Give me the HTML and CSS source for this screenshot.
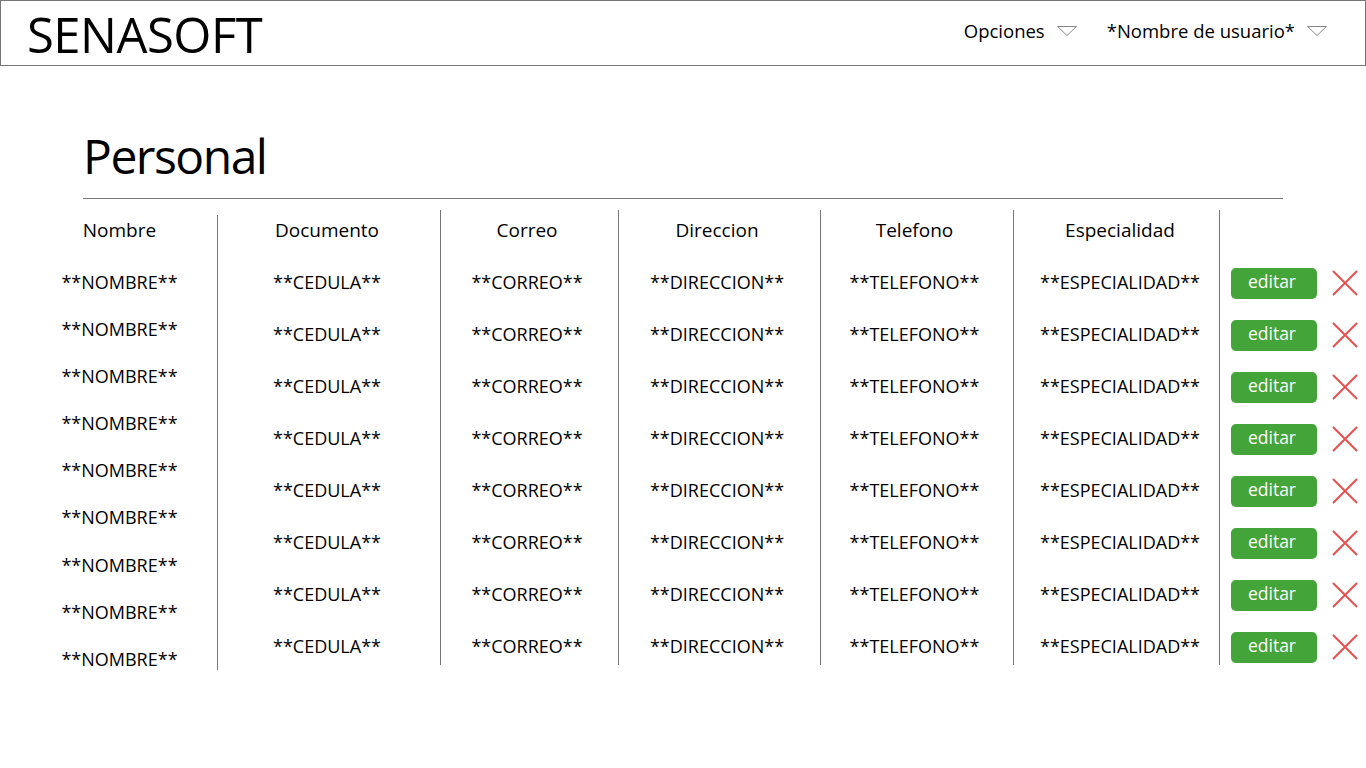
FILE: index.html
```html
<!DOCTYPE html>
<html lang="es">
<head>
<meta charset="utf-8">
<title>SENASOFT - Personal</title>
<link rel="stylesheet" href="styles.css">
</head>
<body>
<header class="topbar">
  <div class="logo">SENASOFT</div>
  <nav class="nav">
    <div class="nav-item">Opciones <svg class="caret" width="20" height="10" viewBox="0 0 20 10"><path d="M0.5 0.5 H19.5 L10 9.5 Z" fill="none" stroke="#8a8a8a" stroke-width="1"/></svg></div>
    <div class="nav-item">*Nombre de usuario* <svg class="caret" width="20" height="10" viewBox="0 0 20 10"><path d="M0.5 0.5 H19.5 L10 9.5 Z" fill="none" stroke="#8a8a8a" stroke-width="1"/></svg></div>
  </nav>
</header>

<section class="title-wrap">
  <h1 class="title">Personal</h1>
</section>

<div class="table">
  <div class="col col-nombre">
    <div class="th">Nombre</div>
    <div class="cells cells-tight">
      <div class="td">**NOMBRE**</div>
      <div class="td">**NOMBRE**</div>
      <div class="td">**NOMBRE**</div>
      <div class="td">**NOMBRE**</div>
      <div class="td">**NOMBRE**</div>
      <div class="td">**NOMBRE**</div>
      <div class="td">**NOMBRE**</div>
      <div class="td">**NOMBRE**</div>
      <div class="td">**NOMBRE**</div>
    </div>
  </div>
  <div class="sep sep-first"></div>
  <div class="col col-doc">
    <div class="th">Documento</div>
    <div class="cells">
      <div class="td">**CEDULA**</div><div class="td">**CEDULA**</div><div class="td">**CEDULA**</div><div class="td">**CEDULA**</div>
      <div class="td">**CEDULA**</div><div class="td">**CEDULA**</div><div class="td">**CEDULA**</div><div class="td">**CEDULA**</div>
    </div>
  </div>
  <div class="sep"></div>
  <div class="col col-correo">
    <div class="th">Correo</div>
    <div class="cells">
      <div class="td">**CORREO**</div><div class="td">**CORREO**</div><div class="td">**CORREO**</div><div class="td">**CORREO**</div>
      <div class="td">**CORREO**</div><div class="td">**CORREO**</div><div class="td">**CORREO**</div><div class="td">**CORREO**</div>
    </div>
  </div>
  <div class="sep"></div>
  <div class="col col-dir">
    <div class="th">Direccion</div>
    <div class="cells">
      <div class="td">**DIRECCION**</div><div class="td">**DIRECCION**</div><div class="td">**DIRECCION**</div><div class="td">**DIRECCION**</div>
      <div class="td">**DIRECCION**</div><div class="td">**DIRECCION**</div><div class="td">**DIRECCION**</div><div class="td">**DIRECCION**</div>
    </div>
  </div>
  <div class="sep"></div>
  <div class="col col-tel">
    <div class="th">Telefono</div>
    <div class="cells">
      <div class="td">**TELEFONO**</div><div class="td">**TELEFONO**</div><div class="td">**TELEFONO**</div><div class="td">**TELEFONO**</div>
      <div class="td">**TELEFONO**</div><div class="td">**TELEFONO**</div><div class="td">**TELEFONO**</div><div class="td">**TELEFONO**</div>
    </div>
  </div>
  <div class="sep"></div>
  <div class="col col-esp">
    <div class="th">Especialidad</div>
    <div class="cells">
      <div class="td">**ESPECIALIDAD**</div><div class="td">**ESPECIALIDAD**</div><div class="td">**ESPECIALIDAD**</div><div class="td">**ESPECIALIDAD**</div>
      <div class="td">**ESPECIALIDAD**</div><div class="td">**ESPECIALIDAD**</div><div class="td">**ESPECIALIDAD**</div><div class="td">**ESPECIALIDAD**</div>
    </div>
  </div>
  <div class="sep"></div>
  <div class="col col-actions">
    <div class="th"></div>
    <div class="cells">
      <div class="td actions"><button class="btn-edit">editar</button><svg class="del" width="26" height="26" viewBox="0 0 26 26"><path d="M1 1 L25 25 M25 1 L1 25" stroke="#e8504f" stroke-width="2" fill="none"/></svg></div>
      <div class="td actions"><button class="btn-edit">editar</button><svg class="del" width="26" height="26" viewBox="0 0 26 26"><path d="M1 1 L25 25 M25 1 L1 25" stroke="#e8504f" stroke-width="2" fill="none"/></svg></div>
      <div class="td actions"><button class="btn-edit">editar</button><svg class="del" width="26" height="26" viewBox="0 0 26 26"><path d="M1 1 L25 25 M25 1 L1 25" stroke="#e8504f" stroke-width="2" fill="none"/></svg></div>
      <div class="td actions"><button class="btn-edit">editar</button><svg class="del" width="26" height="26" viewBox="0 0 26 26"><path d="M1 1 L25 25 M25 1 L1 25" stroke="#e8504f" stroke-width="2" fill="none"/></svg></div>
      <div class="td actions"><button class="btn-edit">editar</button><svg class="del" width="26" height="26" viewBox="0 0 26 26"><path d="M1 1 L25 25 M25 1 L1 25" stroke="#e8504f" stroke-width="2" fill="none"/></svg></div>
      <div class="td actions"><button class="btn-edit">editar</button><svg class="del" width="26" height="26" viewBox="0 0 26 26"><path d="M1 1 L25 25 M25 1 L1 25" stroke="#e8504f" stroke-width="2" fill="none"/></svg></div>
      <div class="td actions"><button class="btn-edit">editar</button><svg class="del" width="26" height="26" viewBox="0 0 26 26"><path d="M1 1 L25 25 M25 1 L1 25" stroke="#e8504f" stroke-width="2" fill="none"/></svg></div>
      <div class="td actions"><button class="btn-edit">editar</button><svg class="del" width="26" height="26" viewBox="0 0 26 26"><path d="M1 1 L25 25 M25 1 L1 25" stroke="#e8504f" stroke-width="2" fill="none"/></svg></div>
    </div>
  </div>
</div>
</body>
</html>
```

FILE: styles.css
```css
* { box-sizing: border-box; }
html, body { margin: 0; padding: 0; background: #fff; }
body {
  font-family: "Open Sans", "Noto Sans", "DejaVu Sans", sans-serif;
  color: #000;
  width: 1366px;
  height: 768px;
  overflow: hidden;
}

.topbar {
  height: 66px;
  width: 1366px;
  border: 1px solid #767676;
  display: flex;
  align-items: center;
  justify-content: space-between;
  padding: 0 38px 0 26px;
}
.logo {
  font-size: 49px;
  line-height: 1;
  letter-spacing: -0.5px;
  margin-top: 3px;
}
.nav { display: flex; align-items: center; gap: 30px; }
.nav-item {
  display: flex;
  align-items: center;
  gap: 12px;
  font-size: 18.5px;
  margin-top: -6px;
}
.caret { display: block; margin-top: 2px; }

.title-wrap {
  margin: 0 0 0 83px;
  width: 1200px;
  border-bottom: 1px solid #767676;
  padding-top: 58px;
  height: 133px;
}
.title {
  margin: 0;
  font-weight: 400;
  font-size: 48px;
  line-height: 64px;
  letter-spacing: -1.5px;
}

.table {
  display: flex;
  margin-left: 22px;
  align-items: flex-start;
}
.col { display: flex; flex-direction: column; align-items: center; }
.th, .td { white-space: nowrap; }
.th { font-size: 19px; height: 30px; line-height: 30px; margin-top: 16px; }
.td { font-size: 18px; }
.cells { display: flex; flex-direction: column; margin-top: 23px; }
.td { height: 52px; line-height: 28px; text-align: center; }
.cells-tight .td { height: 47.1px; }

.sep { width: 1px; background: #767676; height: 455px; margin-top: 11px; }
.sep-first { margin-top: 16px; }

.col-nombre { width: 195px; }
.col-doc { width: 222px; padding-right: 4px; }
.col-correo { width: 177px; padding-right: 5px; }
.col-dir { width: 201px; padding-right: 5px; }
.col-tel { width: 192px; padding-right: 5px; }
.col-esp { width: 205px; padding-left: 7px; }
.col-actions { width: 146px; align-items: flex-start; padding-left: 11px; }

.actions { display: flex; align-items: flex-start; gap: 15px; height: 52px; }
.btn-edit {
  margin-top: 0;
  width: 86px;
  height: 31px;
  background: #43a43a;
  color: #fff;
  border: none;
  border-radius: 5px;
  font-family: inherit;
  font-size: 17.5px;
  padding: 0 4px 4px 0;
  line-height: 1;
}
.del { margin-top: 2px; }
```
